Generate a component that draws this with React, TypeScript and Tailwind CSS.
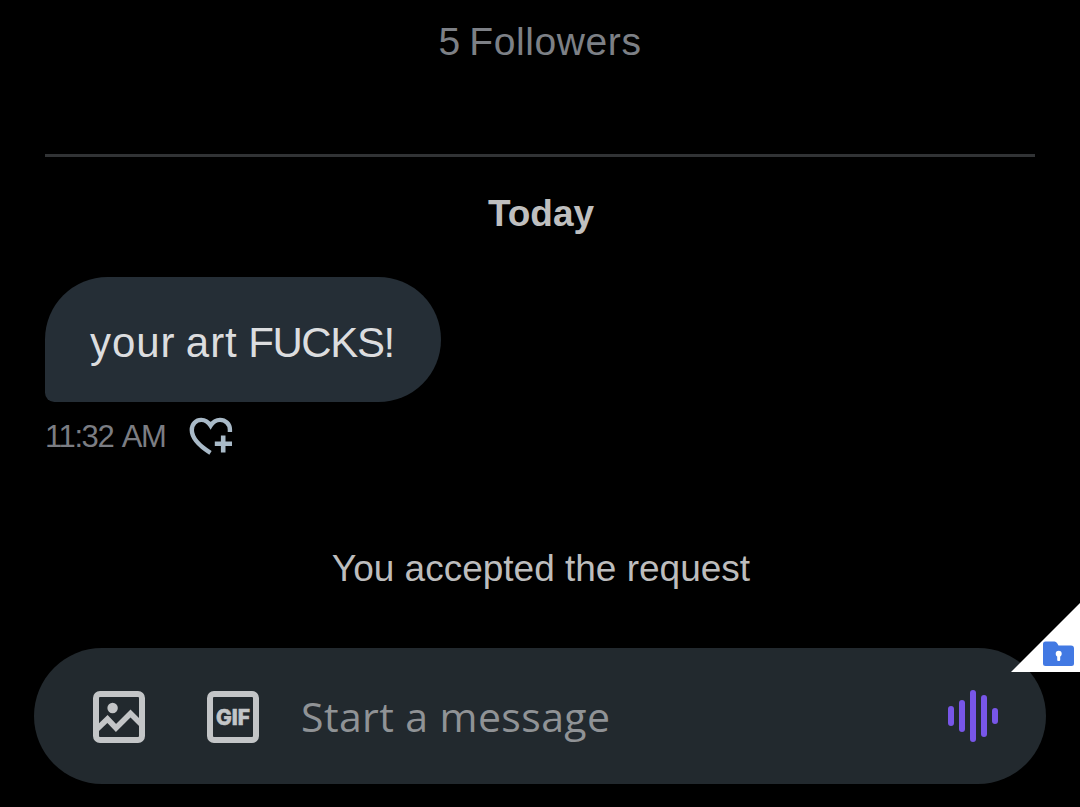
import React, { useState } from "react";

const HeartPlusIcon: React.FC = () => (
  <svg width="44" height="40" viewBox="0 0 44 40" fill="none" className="shrink-0 text-[#a9bac8]">
    <path
      d="M21.5 35.8C13 30.5 2.8 22.5 2.8 13C2.8 7 7 2.9 12.2 2.9C16.4 2.9 19.3 5 21.6 8.6C23.9 5 26.8 2.9 31 2.9C36.4 2.9 40.9 7 40.9 12.6V15"
      stroke="currentColor"
      strokeWidth="4.4"
    />
    <path d="M34.2 18.5V35.5M25.8 26.8H43" stroke="currentColor" strokeWidth="4.6" />
  </svg>
);

const ImageIcon: React.FC = () => (
  <svg width="52" height="52" viewBox="0 0 52 52" fill="none" className="text-[#c3c5c7]">
    <rect x="3" y="3" width="46" height="46" rx="4" stroke="currentColor" strokeWidth="6" />
    <circle cx="19.6" cy="17" r="5.2" fill="currentColor" />
    <path d="M3 39L14.5 28L23 37L37.5 22.5L49 34" stroke="currentColor" strokeWidth="5.6" />
  </svg>
);

const GifIcon: React.FC = () => (
  <svg width="52" height="52" viewBox="0 0 52 52" className="text-[#c3c5c7]">
    <rect x="3" y="3" width="46" height="46" rx="4" fill="none" stroke="currentColor" strokeWidth="6" />
    <text
      x="9"
      y="33.5"
      textLength="34"
      lengthAdjust="spacingAndGlyphs"
      fill="currentColor"
      stroke="currentColor"
      strokeWidth="0.6"
      className="font-[Inter,sans-serif] text-[21px] font-extrabold"
    >
      GIF
    </text>
  </svg>
);

const VoiceIcon: React.FC = () => (
  <svg width="50" height="52" viewBox="0 0 50 52" className="text-[#7856e8]" fill="currentColor">
    <rect x="0" y="16" width="6" height="20" rx="3" />
    <rect x="11" y="10" width="6" height="32" rx="3" />
    <rect x="22" y="0" width="6" height="52" rx="3" />
    <rect x="33" y="5" width="6" height="42" rx="3" />
    <rect x="44" y="18" width="6" height="16" rx="3" />
  </svg>
);

const SecureFolderCorner: React.FC = () => (
  <svg
    width="69"
    height="69"
    viewBox="0 0 69 69"
    className="absolute top-[603px] right-0"
  >
    <path d="M69 0V69H0Z" fill="#fff" />
    <path
      d="M34.5 38.5H43.5Q45 38.5 46 40L47.5 42.5H60Q63 42.5 63 45.5V60.5Q63 63 60.5 63H34.5Q32 63 32 60.5V41Q32 38.5 34.5 38.5Z"
      fill="#4279e3"
    />
    <circle cx="47.7" cy="50.7" r="3" fill="#fff" />
    <rect x="46.2" y="52" width="3" height="6" rx="1" fill="#fff" />
  </svg>
);

const Composer: React.FC = () => {
  const [message, setMessage] = useState("");

  return (
    <div className="mx-[34px] mt-[59px] flex h-[136px] items-center rounded-full bg-[#22292e] pr-12 pl-[59px]">
      <button aria-label="Add image" className="pt-0.5">
        <ImageIcon />
      </button>
      <button aria-label="Add GIF" className="ml-[62px] pt-0.5">
        <GifIcon />
      </button>
      <input
        value={message}
        onChange={(e) => setMessage(e.target.value)}
        placeholder="Start a message"
        className="ml-[42px] h-14 min-w-0 flex-1 bg-transparent pt-0.5 font-['Open_Sans',sans-serif] text-[41px] tracking-[0.4px] text-[#d9d9d9] outline-none placeholder:text-[#909396]"
      />
      <button aria-label="Record voice message">
        <VoiceIcon />
      </button>
    </div>
  );
};

const App: React.FC = () => {
  return (
    <div className="relative h-[807px] w-full overflow-hidden bg-black pt-[22px] font-['Liberation_Sans',sans-serif]">
      <p className="text-center text-[39px] leading-10 tracking-[0.6px] [word-spacing:-3px] text-[#7d8086]">
        5 Followers
      </p>
      <hr className="mx-[45px] mt-[92px] h-[3px] border-0 bg-[#313335]" />
      <h2 className="mt-[37px] pl-0.5 text-center text-[37px] leading-10 font-bold text-[#bfbfbf]">
        Today
      </h2>

      <div className="mt-[43px] ml-[45px] h-[125px] w-[396px] rounded-[67px] rounded-bl-[10px] bg-[#252e36] px-[45px] pt-[42px] text-[42px] leading-[48px] whitespace-nowrap text-[#dcdddf]">
        <span className="tracking-[0.9px] [word-spacing:-2px]">your art </span>
        <span className="tracking-[-1.4px]">FUCKS!</span>
      </div>
      <div className="mt-[15px] ml-[45px] flex h-10 items-center">
        <span className="w-[144px] text-[31px] leading-10 tracking-[-1.4px] [word-spacing:3px] whitespace-nowrap text-[#7b7d83]">
          11:32 AM
        </span>
        <HeartPlusIcon />
      </div>

      <p className="mt-[92px] pl-0.5 text-center text-[37px] leading-10 text-[#bdbdbd]">
        You accepted the request
      </p>

      <Composer />
      <SecureFolderCorner />
    </div>
  );
};

export default App;
